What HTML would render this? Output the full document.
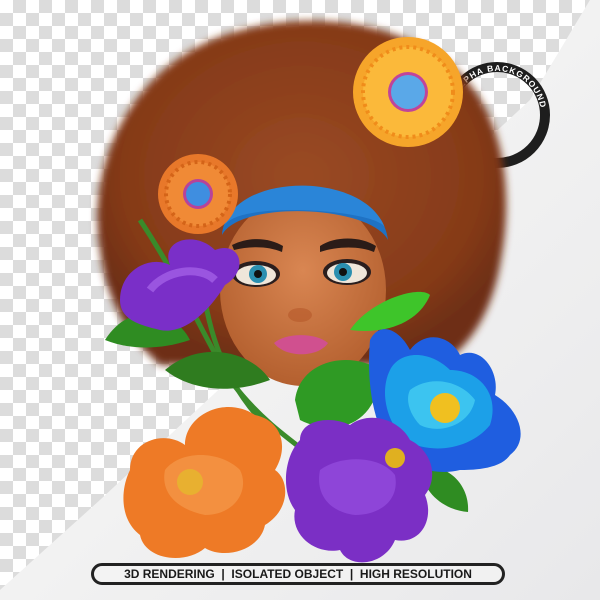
<!DOCTYPE html>
<html><head><meta charset="utf-8"><style>
html,body{margin:0;padding:0;width:600px;height:600px;overflow:hidden;}
body{background:linear-gradient(135deg,#e6e6e8 0%,#f2f2f2 50%,#e8e8ea 100%);position:relative;font-family:"Liberation Sans",sans-serif;}
.chk{position:absolute;left:0;top:0;width:600px;height:600px;
background-color:#fff;
background-image:linear-gradient(45deg,#dcdcdc 25%,transparent 25%,transparent 75%,#dcdcdc 75%),linear-gradient(45deg,#dcdcdc 25%,transparent 25%,transparent 75%,#dcdcdc 75%);
background-size:26px 26px;background-position:0 0,13px 13px;
clip-path:polygon(0 0,590px 0,530px 100px,200px 407px,100px 500px,0 590px);}
svg{position:absolute;left:0;top:0}
.lbl{position:absolute;left:91px;top:563px;width:414px;height:22px;border:3px solid #222;border-radius:14px;box-sizing:border-box;background:rgba(245,245,245,.6);text-align:center;font-weight:bold;font-size:12px;line-height:17px;color:#1a1a1a;}
</style></head><body>
<div class="chk"></div>
<svg width="600" height="600" viewBox="0 0 600 600">
<defs>
<radialGradient id="afro" cx="50%" cy="45%" r="55%"><stop offset="0" stop-color="#9a4a24"/><stop offset="0.8" stop-color="#853a18"/><stop offset="1" stop-color="#6e2f14"/></radialGradient>
<radialGradient id="face" cx="50%" cy="40%" r="60%"><stop offset="0" stop-color="#d98652"/><stop offset="1" stop-color="#b4602f"/></radialGradient>
<filter id="fz"><feGaussianBlur stdDeviation="4"/></filter>
<path id="arc" d="M453,115 A44,44 0 1 1 541,115 A44,44 0 1 1 453,115"/>
</defs>
<circle cx="497" cy="115" r="48" fill="none" stroke="#1e1e1e" stroke-width="10"/>
<text font-family="Liberation Sans" font-weight="bold" font-size="8.5" fill="#fff" letter-spacing="1"><textPath href="#arc" startOffset="22">ALPHA BACKGROUND</textPath></text>
<path filter="url(#fz)" d="M100,250 C85,160 135,65 225,35 C300,10 385,18 445,60 C505,105 515,190 500,265 C490,320 465,350 440,365 L160,365 C120,330 105,290 100,250Z" fill="url(#afro)"/>
<ellipse cx="303" cy="290" rx="83" ry="96" fill="url(#face)"/>
<path d="M222,235 C225,175 380,170 388,240 C370,205 240,200 222,235Z" fill="#1f72c4"/>
<path d="M225,225 C240,172 365,172 385,228 C380,210 240,200 225,225Z" fill="#2a85d8"/>
<path d="M232,245 C250,236 270,238 283,246 L282,252 C268,246 250,246 234,250Z" fill="#2b1c18"/>
<path d="M320,246 C335,236 360,236 376,246 L374,252 C360,246 338,246 320,252Z" fill="#2b1c18"/>
<ellipse cx="256" cy="274" rx="24" ry="13" fill="#2a1e1e"/>
<ellipse cx="256" cy="275" rx="20" ry="10" fill="#efe6da"/>
<circle cx="258" cy="274" r="9" fill="#2b8fb0"/><circle cx="258" cy="274" r="4" fill="#111"/>
<ellipse cx="347" cy="272" rx="24" ry="13" fill="#2a1e1e"/>
<ellipse cx="347" cy="273" rx="20" ry="10" fill="#efe6da"/>
<circle cx="343" cy="272" r="9" fill="#2b8fb0"/><circle cx="343" cy="272" r="4" fill="#111"/>
<ellipse cx="300" cy="315" rx="12" ry="7" fill="#b5582a" opacity=".6"/>
<path d="M274,343 C285,333 315,332 328,343 C318,358 285,358 274,343Z" fill="#d0508f"/>
<path d="M140,220 C180,280 200,330 230,380 C260,420 290,440 330,470" stroke="#3a8a2a" stroke-width="5" fill="none"/>
<path d="M205,300 C215,360 240,400 270,430" stroke="#3a8a2a" stroke-width="5" fill="none"/>
<path d="M105,340 C130,300 175,310 190,340 C160,350 130,350 105,340Z" fill="#2f8c22"/>
<path d="M165,370 C200,340 250,350 270,380 C230,395 190,390 165,370Z" fill="#2f7c1f"/>
<path d="M350,330 C370,300 420,285 430,295 C420,320 390,335 350,330Z" fill="#3ec52a"/>
<path d="M295,400 C300,360 350,350 380,370 C380,420 340,440 300,420Z" fill="#2f9a24"/>
<path d="M420,470 C440,460 470,480 468,512 C445,510 425,495 420,470Z" fill="#2f8c22"/>
<g transform="translate(408,92)">
<circle r="55" fill="#f6a52a"/>
<circle r="45" fill="#fbb93a" stroke="#f08c1a" stroke-width="4" stroke-dasharray="3 4"/>
<circle r="20" fill="#c0449a"/><circle r="17" fill="#5aa8e8"/>
</g>
<g transform="translate(198,194)">
<circle r="40" fill="#e8782a"/>
<circle r="32" fill="#f08a36" stroke="#d46418" stroke-width="4" stroke-dasharray="3 4"/>
<circle r="15" fill="#b7439a"/><circle r="12" fill="#3f8ee0"/>
</g>
<path d="M120,300 C120,270 150,255 170,265 C160,240 195,230 215,250 C240,240 250,270 225,285 C210,310 185,335 160,330 C140,325 120,320 120,300Z" fill="#7a2fc8"/>
<path d="M150,290 C165,270 200,265 215,280" stroke="#9a55e0" stroke-width="8" fill="none"/>
<path d="M370,340 C380,320 400,330 410,350 C425,330 450,335 460,355 C480,345 500,370 495,395 C520,410 530,440 510,455 C500,470 470,470 460,470 C440,475 420,470 400,460 C380,440 365,400 370,340Z" fill="#1f5ee0"/>
<path d="M390,370 C400,350 430,350 450,370 C480,370 500,395 490,425 C470,450 430,455 405,440 C385,420 380,390 390,370Z" fill="#1ca0e8"/>
<path d="M410,390 C430,375 460,380 475,400 C470,425 440,435 420,425 C410,415 405,400 410,390Z" fill="#3cc4f0"/>
<circle cx="445" cy="408" r="15" fill="#f0c020"/>
<path d="M130,470 C130,440 165,430 185,445 C185,415 225,395 255,415 C280,420 290,445 275,470 C290,480 290,510 265,525 C260,550 225,560 205,548 C185,565 145,560 140,535 C120,520 120,490 130,470Z" fill="#ee7a26"/>
<path d="M165,470 C180,450 220,450 240,470 C250,490 235,515 205,515 C180,510 160,495 165,470Z" fill="#f39040"/>
<circle cx="190" cy="482" r="13" fill="#e8b030"/>
<path d="M300,440 C300,420 330,415 350,425 C370,410 400,420 410,440 C430,450 440,475 425,495 C435,520 420,545 395,540 C385,565 350,570 340,550 C315,555 290,535 295,510 C280,490 285,455 300,440Z" fill="#7b2fc5"/>
<path d="M320,470 C340,455 380,455 395,475 C400,500 380,515 355,515 C330,512 315,495 320,470Z" fill="#8e45d8"/>
<circle cx="395" cy="458" r="10" fill="#e0b020"/>
</svg>
<div class="lbl">3D RENDERING &nbsp;|&nbsp; ISOLATED OBJECT &nbsp;|&nbsp; HIGH RESOLUTION</div>
</body></html>
